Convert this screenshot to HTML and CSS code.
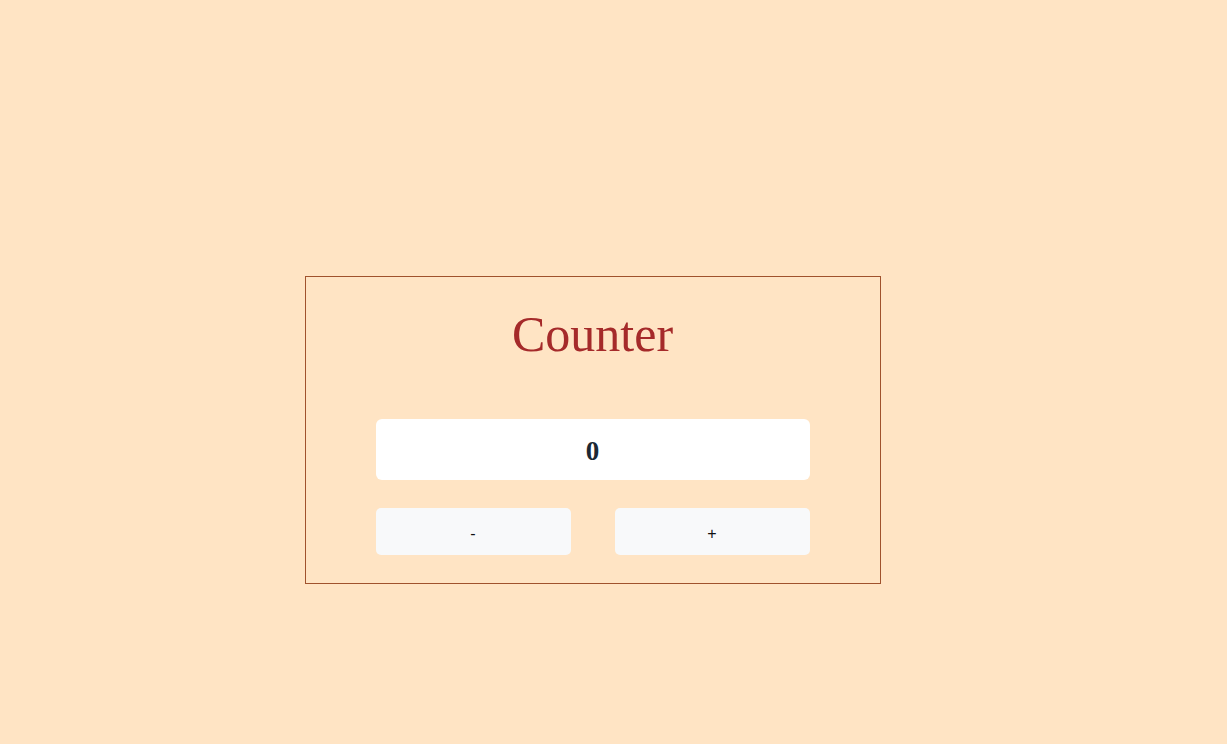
FILE: index.html
```html
<!DOCTYPE html>
<html>
<head>
<meta charset="utf-8">
<link rel="stylesheet" href="styles.css">
</head>
<body>
<div class="page">
  <div class="card">
    <h1 class="title">Counter</h1>
    <div class="display">0</div>
    <div class="buttons">
      <button class="btn">-</button>
      <button class="btn">+</button>
    </div>
  </div>
</div>
</body>
</html>
```
FILE: styles.css
```css
html, body {
  margin: 0;
  padding: 0;
  background: #ffe4c4;
  height: 100%;
}
.page {
  height: 744px;
  display: flex;
  justify-content: center;
  padding-top: 276px;
  box-sizing: border-box;
  padding-right: 42px;
}
.card {
  width: 576px;
  height: 308px;
  box-sizing: border-box;
  border: 1px solid #a0522d;
  padding: 0 70px 27px;
  display: flex;
  flex-direction: column;
}
.title {
  margin: 27px 0 0;
  height: 115px;
  text-align: center;
  font-family: "Liberation Serif", "DejaVu Serif", serif;
  font-weight: normal;
  font-size: 50px;
  line-height: 60px;
  color: #a52a2a;
}
.display {
  height: 61px;
  background: #fff;
  border-radius: 6px;
  display: flex;
  align-items: center;
  justify-content: center;
  font-family: "Liberation Serif", serif;
  font-weight: bold;
  font-size: 27px;
  color: #1c2833;
  padding-top: 4px;
  box-sizing: border-box;
}
.buttons {
  margin-top: 28px;
  display: flex;
  gap: 44px;
}
.btn {
  flex: 1;
  height: 47px;
  border: none;
  border-radius: 5px;
  background: #f8f9fa;
  font-family: "Liberation Sans", Arial, sans-serif;
  font-size: 16px;
  color: #111;
  padding: 4px 0 0;
}
```
